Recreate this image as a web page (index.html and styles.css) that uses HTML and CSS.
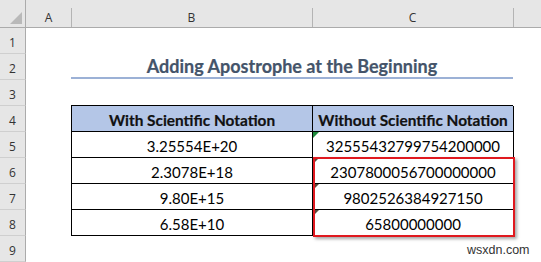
FILE: index.html
```html
<!DOCTYPE html>
<html>
<head>
<meta charset="utf-8">
<link rel="stylesheet" href="styles.css">
</head>
<body>
<div class="sheet">
  <div class="corner"><span class="corner-tri"></span></div>
  <div class="colhdr">A</div>
  <div class="colhdr sep">B</div>
  <div class="colhdr sep">C</div>
  <div class="colhdr sep"></div>

  <div class="rowhdr">1</div><div class="cell"></div><div class="cell"></div><div class="cell"></div><div class="cell"></div>

  <div class="rowhdr">2</div><div class="cell"></div><div class="cell title">Adding Apostrophe at the Beginning</div><div class="cell"></div>

  <div class="rowhdr">3</div><div class="cell"></div><div class="cell above"></div><div class="cell above"></div><div class="cell"></div>

  <div class="rowhdr">4</div><div class="cell"></div><div class="cell th tb">With Scientific Notation</div><div class="cell th tc">Without Scientific Notation</div><div class="cell td-after"></div>

  <div class="rowhdr">5</div><div class="cell"></div><div class="cell tb">3.25554E+20</div><div class="cell tc"><span class="tri green"></span>32555432799754200000</div><div class="cell td-after"></div>

  <div class="rowhdr">6</div><div class="cell"></div><div class="cell tb">2.3078E+18</div><div class="cell tc"><span class="tri dark"></span><span class="highlight"></span>2307800056700000000</div><div class="cell td-after"></div>

  <div class="rowhdr">7</div><div class="cell"></div><div class="cell tb">9.80E+15</div><div class="cell tc"><span class="tri dark"></span>9802526384927150</div><div class="cell td-after"></div>

  <div class="rowhdr">8</div><div class="cell"></div><div class="cell tb">6.58E+10</div><div class="cell tc"><span class="tri dark"></span>65800000000</div><div class="cell td-after"></div>

  <div class="rowhdr">9</div><div class="cell"></div><div class="cell"></div><div class="cell"></div><div class="cell"></div>
</div>
<div class="watermark">wsxdn.com</div>
</body>
</html>
```

FILE: styles.css
```css
* { box-sizing: border-box; }
html, body { margin: 0; padding: 0; background: #fff; }
body { width: 541px; height: 262px; overflow: hidden; position: relative; }

.sheet {
  display: grid;
  grid-template-columns: 26px 45px 241px 201px 1fr;
  grid-template-rows: 28px repeat(9, 26px);
  font-family: Lato, "Open Sans", sans-serif;
}

.corner {
  background: #e6e6e6;
  border-right: 1px solid #ababab;
  border-bottom: 1px solid #ababab;
  position: relative;
}
.corner-tri {
  position: absolute;
  left: 10px;
  top: 12px;
  width: 0; height: 0;
  border-left: 12px solid transparent;
  border-bottom: 12px solid #b9b9b9;
}

.colhdr {
  background: #e6e6e6;
  border-bottom: 1px solid #ababab;
  font-family: "Open Sans", sans-serif;
  font-size: 12px;
  color: #333;
  display: flex;
  align-items: center;
  justify-content: center;
  padding-top: 7px;
  position: relative;
}
.colhdr.sep::before {
  content: "";
  position: absolute;
  left: 0;
  top: 8px;
  bottom: 0;
  width: 1px;
  background: #b4b4b4;
}

.rowhdr {
  background: #e6e6e6;
  border-right: 1px solid #ababab;
  border-bottom: 1px solid #cfcfcf;
  font-family: "Open Sans", sans-serif;
  font-size: 12px;
  color: #333;
  display: flex;
  align-items: center;
  justify-content: center;
  padding-top: 3px;
}

.cell {
  background: #fff;
  display: flex;
  align-items: center;
  justify-content: center;
  font-size: 15px;
  color: #000;
  padding-top: 2px;
  white-space: nowrap;
}

.title {
  grid-column: span 2;
  font-weight: bold;
  font-size: 18px;
  color: #44546a;
  border-bottom: 2px solid #9cb1d6;
  margin-bottom: 1px;
  padding-top: 0;
  -webkit-text-stroke: 0.2px #44546a;
}

.above { border-bottom: 1px solid #000; }

.tb { border-left: 1px solid #000; border-bottom: 1px solid #000; }
.tc { border-left: 1px solid #000; border-bottom: 1px solid #000; position: relative; }
.td-after { border-left: 1px solid #000; }

.th {
  background: #b4c6e7;
  font-weight: bold;
  font-size: 15.4px;
  color: #111;
  -webkit-text-stroke: 0.2px #111;
}

.tri {
  position: absolute;
  left: 0;
  top: 0;
  width: 0; height: 0;
  border-top: 6px solid #1e8a3c;
  border-right: 6px solid transparent;
}
.tri.dark { border-top-color: #5a4b3c; }

.highlight {
  position: absolute;
  left: 0;
  top: -1px;
  width: 202px;
  height: 80px;
  border: 2px solid #e0191f;
  box-shadow: 2px 2px 3px rgba(0,0,0,0.35);
  z-index: 2;
}

.watermark {
  position: absolute;
  left: 467px;
  top: 243px;
  font-family: "Liberation Sans", Arial, sans-serif;
  font-size: 12.5px;
  color: #333;
}
```
